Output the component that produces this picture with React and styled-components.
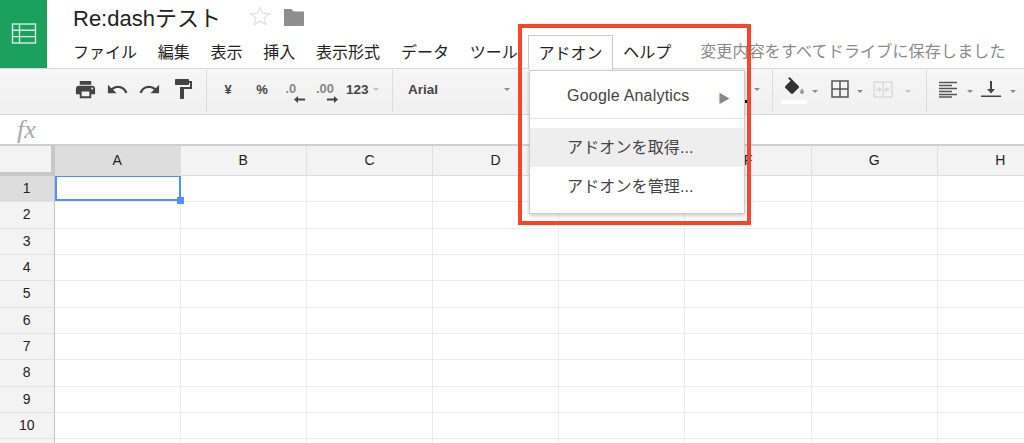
import React from "react"
import styled, { createGlobalStyle } from "styled-components"
import { MdPrint, MdUndo, MdRedo, MdFormatPaint } from "react-icons/md"

const jp = `"Liberation Sans", "Noto Sans CJK JP", sans-serif`

const GlobalStyle = createGlobalStyle`
  html, body {
    margin: 0;
    background: #fff;
    font-family: ${jp};
  }
`

const menuItems = ["ファイル", "編集", "表示", "挿入", "表示形式", "データ", "ツール"]
const columns = ["A", "B", "C", "D", "E", "F", "G", "H"]
const rows = [1, 2, 3, 4, 5, 6, 7, 8, 9, 10, ""]

function Caret({ $light }) {
  return <CaretMark $light={$light} />
}

export default function App() {
  return (
    <Page>
      <GlobalStyle />
      <Header>
        <Logo>
          <svg width="26" height="22" viewBox="0 0 26 22" fill="none" stroke="#d4efe0" strokeWidth="1.4">
            <rect x="1.5" y="1" width="23" height="19" />
            <path d="M1.5 7.3h23M1.5 13.6h23M8.5 1v19" />
          </svg>
        </Logo>
        <HeaderBody>
          <TitleRow>
            <Title>Re:dashテスト</Title>
            <svg width="22" height="22" viewBox="0 0 22 22" fill="none" stroke="#dfdfdf" strokeWidth="1.2">
              <path d="M11 2l2.6 6.2 6.7.5-5.1 4.4 1.6 6.5L11 16.2l-5.8 3.4 1.6-6.5L1.700 8.700l6.700-.5z" />
            </svg>
            <FolderIcon width="20" height="18" viewBox="0 0 20 18" fill="#8e8e8e">
              <path d="M0 1h7.500l2 2.500H20V18H0z" />
            </FolderIcon>
          </TitleRow>
          <MenuRow>
            {menuItems.map((item) => (
              <MenuItem key={item}>{item}</MenuItem>
            ))}
            <MenuItem $open>
              アドオン
              <Dropdown>
                <DropItem $first>
                  Google Analytics
                  <SubArrow>▶</SubArrow>
                </DropItem>
                <DropDivider />
                <DropItem $hover>アドオンを取得...</DropItem>
                <DropItem>アドオンを管理...</DropItem>
              </Dropdown>
            </MenuItem>
            <MenuItem>ヘルプ</MenuItem>
            <SaveNote>変更内容をすべてドライブに保存しました</SaveNote>
          </MenuRow>
        </HeaderBody>
      </Header>

      <Toolbar>
        <ToolGroup $w={207} $pad={69}>
          <ToolButton $w={32}><MdPrint size={23} /></ToolButton>
          <ToolButton $w={32}><MdUndo size={23} /></ToolButton>
          <ToolButton $w={32}><MdRedo size={23} /></ToolButton>
          <ToolButton $w={36}><MdFormatPaint size={24} /></ToolButton>
        </ToolGroup>
        <ToolGroup $w={186} $pad={4}>
          <ToolText $w={34}>¥</ToolText>
          <ToolText $w={34}>%</ToolText>
          <ToolButton $w={32}>
            <Decimal>
              <DecimalText>.0</DecimalText>
              <DecimalArrow $shift={8} width="11" height="7" viewBox="0 0 11 7" fill="#444">
                <path d="M0 3.500L4 0v2.500h7v2H4V7z" />
              </DecimalArrow>
            </Decimal>
          </ToolButton>
          <ToolButton $w={32}>
            <Decimal>
              <DecimalText>.00</DecimalText>
              <DecimalArrow $shift={11} width="11" height="7" viewBox="0 0 11 7" fill="#444">
                <path d="M11 3.500L7 0v2.500H0v2h7V7z" />
              </DecimalArrow>
            </Decimal>
          </ToolButton>
          <NumberFormat>
            123
            <Caret $light />
          </NumberFormat>
        </ToolGroup>
        <FontGroup>
          <FontName>Arial</FontName>
          <Caret />
          <ColorTail>
            <ColorDot />
            <Caret />
          </ColorTail>
        </FontGroup>
        <ToolGroup $w={154} $pad={11}>
          <ToolButton $w={24}>
            <svg width="24" height="24" viewBox="0 0 24 24">
              <path fill="#333" d="M14.560 8.940L5.620 0 4.210 1.410l2.380 2.380-5.150 5.150c-.59.590-.59 1.540 0 2.120l5.500 5.500c.29.290.680.440 1.060.440s.770-.150 1.060-.440l5.500-5.500c.590-.580.590-1.530 0-2.120z" />
              <path fill="#999" d="M18 11.500s-2 2.170-2 3.500c0 1.100.900 2 2 2s2-.900 2-2c0-1.330-2-3.500-2-3.500z" />
            </svg>
            <FillBar />
          </ToolButton>
          <ToolCaretSlot $w={14}><Caret /></ToolCaretSlot>
          <ToolButton $w={35}>
            <svg width="18" height="18" viewBox="0 0 18 18" fill="none" stroke="#555" strokeWidth="1.5">
              <rect x="1" y="1" width="16" height="16" />
              <path d="M9 1v16M1 9h16" />
            </svg>
          </ToolButton>
          <ToolCaretSlot $w={6}><Caret /></ToolCaretSlot>
          <ToolButton $w={40}>
            <svg width="20" height="17" viewBox="0 0 20 17" fill="none" stroke="#d8d8d8" strokeWidth="1.300">
              <rect x="1" y="1" width="18" height="15" />
              <path d="M10 1v15M3 8.500h5M6 6.500l2 2-2 2M17 8.500h-5M14 6.500l-2 2 2 2" />
            </svg>
          </ToolButton>
          <ToolCaretSlot $w={10}><Caret $light /></ToolCaretSlot>
        </ToolGroup>
        <ToolGroup $last $pad={8}>
          <ToolButton $w={26}>
            <svg width="18" height="17" viewBox="0 0 18 17" stroke="#555" strokeWidth="1.500">
              <path d="M0 1.500h18M0 4.500h13M0 7.500h18M0 10.500h13M0 13.500h18M0 16h13" />
            </svg>
          </ToolButton>
          <ToolCaretSlot $w={17}><Caret /></ToolCaretSlot>
          <ToolButton $w={26}>
            <svg width="20" height="18" viewBox="0 0 20 18" fill="#444">
              <path d="M9 1h2v8h3l-4 4.500L6 9h3zM0 15.500h20V17H0z" />
            </svg>
          </ToolButton>
          <ToolCaretSlot $w={17}><Caret /></ToolCaretSlot>
        </ToolGroup>
      </Toolbar>

      <FormulaBar>
        <FxLabel>fx</FxLabel>
      </FormulaBar>

      <Sheet>
        <Corner />
        {columns.map((col, i) => (
          <ColHead key={col} $active={i === 0}>{col}</ColHead>
        ))}
        {rows.map((row, r) => (
          <React.Fragment key={r}>
            <RowHead $active={row === 1}>{row}</RowHead>
            {columns.map((col) => (
              <Cell key={col}>
                {row === 1 && col === "A" && <Selection />}
              </Cell>
            ))}
          </React.Fragment>
        ))}
      </Sheet>

      <Callout />
    </Page>
  )
}

const Page = styled.div`
  position: relative;
  width: 1024px;
  height: 443px;
  overflow: hidden;
  background: #fff;
`

const Header = styled.header`
  display: flex;
  height: 68px;
  border-bottom: 1px solid #d9d9d9;
`

const Logo = styled.div`
  display: flex;
  align-items: center;
  justify-content: center;
  flex: none;
  width: 47px;
  height: 68px;
  background: #1ba15d;
`

const HeaderBody = styled.div`
  display: flex;
  flex: 1;
  flex-direction: column;
  padding-left: 15.5px;
`

const TitleRow = styled.div`
  display: flex;
  align-items: center;
  box-sizing: border-box;
  height: 35px;
  padding: 0 0 4px 10.5px;
`

const Title = styled.h1`
  width: 176px;
  margin: 0;
  font-size: 22px;
  font-weight: 400;
  color: #222;
`

const FolderIcon = styled.svg`
  margin: 3px 0 0 13px;
`

const MenuRow = styled.nav`
  display: flex;
  height: 34px;
`

const MenuItem = styled.div`
  position: relative;
  z-index: ${(p) => (p.$open ? 2 : 0)};
  display: flex;
  align-items: center;
  height: ${(p) => (p.$open ? "35px" : "34px")};
  padding: 0 9.4px 3px;
  box-sizing: border-box;
  border: 1px solid ${(p) => (p.$open ? "#ccc" : "transparent")};
  border-bottom: none;
  background: ${(p) => (p.$open ? "#fff" : "transparent")};
  font-size: 16px;
  color: #222;
  white-space: nowrap;
`

const SaveNote = styled.span`
  display: flex;
  align-items: center;
  margin-left: 18.5px;
  padding-bottom: 5px;
  font-size: 16px;
  letter-spacing: 0.17px;
  color: #8a8a8a;
  white-space: nowrap;
`

const Dropdown = styled.div`
  position: absolute;
  top: 34px;
  left: 0;
  box-sizing: border-box;
  width: 216px;
  height: 144px;
  border: 1px solid #ccc;
  background: #fff;
  box-shadow: 0 2px 4px rgba(0, 0, 0, 0.2);
`

const DropItem = styled.div`
  position: relative;
  display: flex;
  align-items: center;
  box-sizing: border-box;
  height: ${(p) => (p.$first ? "47px" : "39px")};
  padding: ${(p) => (p.$first ? "3px 0 0 37px" : "0 0 3px 37px")};
  background: ${(p) => (p.$hover ? "#eee" : "transparent")};
  font-size: 16px;
  letter-spacing: ${(p) => (p.$first ? "0.2px" : "0.12px")};
  color: #444;
`

const SubArrow = styled.span`
  position: absolute;
  top: 18px;
  right: 14px;
  font-size: 12px;
  letter-spacing: 0;
  color: #888;
`

const DropDivider = styled.div`
  height: 1px;
  margin-bottom: 9px;
  background: #e6e6e6;
`

const Toolbar = styled.div`
  display: flex;
  box-sizing: border-box;
  height: 46px;
  padding: 1px 0 2px;
  border-bottom: 1px solid #d9d9d9;
  background: linear-gradient(#f6f6f6, #f0f0f0);
`

const ToolGroup = styled.div`
  display: flex;
  align-items: center;
  flex: ${(p) => (p.$last ? "1" : "none")};
  box-sizing: border-box;
  width: ${(p) => (p.$w ? `${p.$w}px` : "auto")};
  padding: 0 0 4px ${(p) => p.$pad}px;
  border-right: ${(p) => (p.$last ? "none" : "1px solid #dcdcdc")};
`

const FontGroup = styled.div`
  display: flex;
  align-items: center;
  flex: none;
  box-sizing: border-box;
  width: 380px;
  padding: 0 0 4px 15px;
  border-right: 1px solid #dcdcdc;
`

const FontName = styled.span`
  width: 96px;
  font-size: 13.5px;
  font-weight: 700;
  color: #444;
`

const ColorTail = styled.div`
  display: flex;
  align-items: center;
  gap: 6px;
  margin-left: auto;
  padding-right: 12px;
`

const ColorDot = styled.span`
  width: 3px;
  height: 3px;
  margin-top: 24px;
  background: #000;
`

const ToolButton = styled.div`
  position: relative;
  display: flex;
  align-items: center;
  justify-content: center;
  flex: none;
  width: ${(p) => p.$w}px;
  color: #444;
`

const ToolCaretSlot = styled.div`
  display: flex;
  align-items: center;
  justify-content: center;
  flex: none;
  width: ${(p) => p.$w}px;
  padding-top: 4px;
`

const ToolText = styled.span`
  flex: none;
  width: ${(p) => p.$w}px;
  font-size: 13px;
  font-weight: 700;
  text-align: center;
  color: #444;
`

const Decimal = styled.div`
  display: flex;
  flex-direction: column;
  align-items: flex-start;
  margin-top: 7px;
`

const DecimalText = styled.span`
  font-size: 13px;
  font-weight: 700;
  line-height: 14px;
  color: #888;
`

const DecimalArrow = styled.svg`
  margin-left: ${(p) => p.$shift}px;
`

const NumberFormat = styled.div`
  display: flex;
  align-items: center;
  gap: 4px;
  margin-left: 3px;
  font-size: 13.5px;
  font-weight: 700;
  color: #444;
`

const CaretMark = styled.span`
  width: 0;
  height: 0;
  border-top: 3px solid ${(p) => (p.$light ? "#c4c4c4" : "#8a8a8a")};
  border-left: 3.5px solid transparent;
  border-right: 3.5px solid transparent;
`

const FillBar = styled.span`
  position: absolute;
  left: -3px;
  top: 23px;
  width: 26px;
  height: 4px;
  background: #fff;
`

const FormulaBar = styled.div`
  display: flex;
  align-items: center;
  box-sizing: border-box;
  height: 31px;
  padding-left: 17px;
  border-bottom: 2px solid #cfcfcf;
`

const FxLabel = styled.span`
  font-family: "Liberation Serif", serif;
  font-size: 26px;
  font-style: italic;
  color: #a8a8a8;
`

const Sheet = styled.div`
  display: grid;
  grid-template-columns: 54.5px repeat(8, 126.2px);
  grid-auto-rows: 26.33px;
  grid-template-rows: 30px;
`

const Corner = styled.div`
  box-sizing: border-box;
  border-right: 4px solid #c8c8c8;
  border-bottom: 4px solid #c8c8c8;
  background: #f3f3f3;
`

const ColHead = styled.div`
  display: flex;
  align-items: center;
  justify-content: center;
  box-sizing: border-box;
  padding-bottom: 2px;
  border-right: 1px solid #e0e0e0;
  border-bottom: 1px solid #dcdcdc;
  background: ${(p) => (p.$active ? "#dddddd" : "#f3f3f3")};
  font-size: 14px;
  color: #222;
`

const RowHead = styled.div`
  display: flex;
  align-items: center;
  justify-content: center;
  box-sizing: border-box;
  padding-bottom: 1px;
  border-right: 1px solid #c4c4c4;
  border-bottom: 1px solid #e2e2e2;
  background: ${(p) => (p.$active ? "#dddddd" : "#f3f3f3")};
  font-size: 14px;
  color: #222;
`

const Cell = styled.div`
  position: relative;
  box-sizing: border-box;
  border-right: 1px solid #ececec;
  border-bottom: 1px solid #ececec;
`

const Selection = styled.div`
  position: absolute;
  z-index: 1;
  top: 0;
  left: 0;
  right: -1px;
  bottom: 0;
  border: 2px solid #4d90fe;
  border-top-width: 1px;

  &::after {
    content: "";
    position: absolute;
    right: -5px;
    bottom: -5px;
    width: 7px;
    height: 7px;
    background: #4d90fe;
  }
`

const Callout = styled.div`
  position: absolute;
  z-index: 3;
  top: 24px;
  left: 518px;
  box-sizing: border-box;
  width: 233px;
  height: 201px;
  border: 4px solid #f4462a;
  pointer-events: none;
`
